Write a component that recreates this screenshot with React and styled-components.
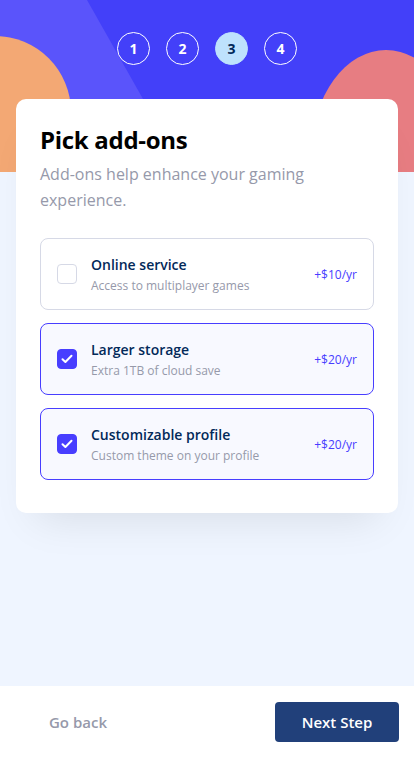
import React, { useState } from 'react';
import styled, { createGlobalStyle } from 'styled-components';

const GlobalStyle = createGlobalStyle`
    html, body {
        margin: 0;
        padding: 0;
    }
    body {
        font-family: 'Open Sans', 'Noto Sans', sans-serif;
        background: #eff5ff;
        -webkit-font-smoothing: antialiased;
    }
    * {
        box-sizing: border-box;
    }
`;

const Page = styled.div`
    min-height: 100vh;
    display: flex;
    flex-direction: column;
    background: #eff5ff;
`;

const Main = styled.main`
    position: relative;
    flex: 1;
    padding: 32px 16px 40px;
`;

const Backdrop = styled.svg`
    position: absolute;
    top: 0;
    left: 0;
    width: 100%;
    height: 172px;
    display: block;
`;

const Steps = styled.ol`
    position: relative;
    list-style: none;
    margin: 0 0 34px;
    padding: 0;
    display: flex;
    justify-content: center;
    gap: 16px;
`;

const Step = styled.li`
    width: 33px;
    height: 33px;
    border-radius: 50%;
    display: flex;
    align-items: center;
    justify-content: center;
    font-size: 14px;
    font-weight: 700;
    color: ${({ $active }) => ($active ? '#022959' : '#fff')};
    background: ${({ $active }) => ($active ? '#bee2fd' : 'transparent')};
    border: 1px solid ${({ $active }) => ($active ? '#bee2fd' : '#fff')};
`;

const Card = styled.section`
    position: relative;
    background: #fff;
    border-radius: 10px;
    padding: 26px 24px 33px;
    box-shadow: 0 25px 40px -20px rgba(0, 0, 0, 0.1);
`;

const Title = styled.h1`
    margin: 0 0 7px;
    font-size: 24px;
    line-height: 29px;
    font-weight: 700;
    color: #000;
    letter-spacing: -0.3px;
`;

const Lead = styled.p`
    margin: 0 0 25px;
    font-size: 16px;
    line-height: 26px;
    color: #9699aa;
`;

const AddonList = styled.div`
    display: flex;
    flex-direction: column;
    gap: 13px;
`;

const Addon = styled.label`
    height: 72px;
    display: flex;
    align-items: center;
    gap: 14px;
    padding: 0 16px;
    border-radius: 8px;
    cursor: pointer;
    border: 1px solid ${({ $checked }) => ($checked ? '#483eff' : '#d6d9e6')};
    background: ${({ $checked }) => ($checked ? '#f8f9ff' : '#fff')};
`;

const Box = styled.span`
    width: 20px;
    height: 20px;
    flex: none;
    border-radius: 4px;
    display: flex;
    align-items: center;
    justify-content: center;
    border: 1px solid ${({ $checked }) => ($checked ? '#483eff' : '#d6d9e6')};
    background: ${({ $checked }) => ($checked ? '#483eff' : '#fff')};
`;

const Info = styled.div`
    flex: 1;
    display: flex;
    flex-direction: column;
    gap: 3px;
`;

const Name = styled.span`
    font-size: 14px;
    line-height: 19px;
    font-weight: 600;
    color: #022959;
`;

const Desc = styled.span`
    font-size: 12px;
    line-height: 17px;
    color: #9699aa;
`;

const Price = styled.span`
    font-size: 12px;
    line-height: 17px;
    color: #483eff;
`;

const Footer = styled.footer`
    background: #fff;
    padding: 16px 15px 16px 16px;
    display: flex;
    justify-content: space-between;
    align-items: center;
`;

const Button = styled.button`
    width: 124px;
    height: 40px;
    border: none;
    border-radius: 4px;
    font-family: inherit;
    font-size: 15px;
    font-weight: 600;
    cursor: pointer;
    color: ${({ $primary }) => ($primary ? '#fff' : '#9699aa')};
    background: ${({ $primary }) => ($primary ? '#21407a' : 'transparent')};
`;

const Check = () => (
    <svg width="12" height="10" viewBox="0 0 12 10" fill="none">
        <path d="M1.5 5.2 4.4 8 10.5 1.8" stroke="#fff" strokeWidth="2" strokeLinecap="round" strokeLinejoin="round" />
    </svg>
);

const addons = [
    { id: 'online', name: 'Online service', desc: 'Access to multiplayer games', price: '+$10/yr' },
    { id: 'storage', name: 'Larger storage', desc: 'Extra 1TB of cloud save', price: '+$20/yr' },
    { id: 'profile', name: 'Customizable profile', desc: 'Custom theme on your profile', price: '+$20/yr' },
];

export default function App() {
    const [picked, setPicked] = useState({ storage: true, profile: true });

    const toggle = (id) => {
        setPicked(prev => ({ ...prev, [id]: !prev[id] }));
    };

    return (
        <Page>
            <GlobalStyle />
            <Main>
                <Backdrop viewBox="0 0 414 172" preserveAspectRatio="none" aria-hidden="true">
                    <rect width="414" height="172" fill="#4340f9" />
                    <path d="M0 0H87L143 99L160 172H0Z" fill="#5a54fb" />
                    <circle cx="-5" cy="112" r="76" fill="#f3a874" />
                    <ellipse cx="386" cy="152" rx="74" ry="102" fill="#e77d82" />
                </Backdrop>
                <Steps>
                    {[1, 2, 3, 4].map(n => (
                        <Step key={n} $active={n === 3}>{n}</Step>
                    ))}
                </Steps>
                <Card>
                    <Title>Pick add-ons</Title>
                    <Lead>Add-ons help enhance your gaming experience.</Lead>
                    <AddonList>
                        {addons.map(addon => {
                            const checked = !!picked[addon.id];
                            return (
                                <Addon key={addon.id} $checked={checked} onClick={() => toggle(addon.id)}>
                                    <Box $checked={checked}>{checked && <Check />}</Box>
                                    <Info>
                                        <Name>{addon.name}</Name>
                                        <Desc>{addon.desc}</Desc>
                                    </Info>
                                    <Price>{addon.price}</Price>
                                </Addon>
                            );
                        })}
                    </AddonList>
                </Card>
            </Main>
            <Footer>
                <Button>Go back</Button>
                <Button $primary>Next Step</Button>
            </Footer>
        </Page>
    );
}
